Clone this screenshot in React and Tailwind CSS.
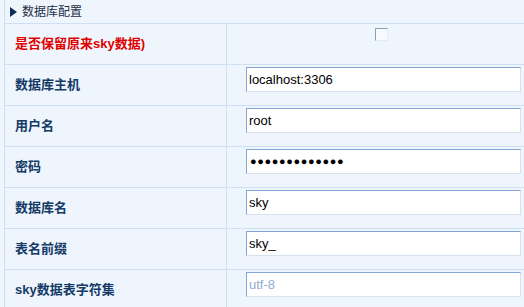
import React from "react";

const font = { fontFamily: '"Liberation Sans", "Noto Sans CJK SC", sans-serif' };

function Field({ children, muted }) {
  return (
    <div
      className={`mt-[2px] ml-[19px] h-[25px] w-[275px] bg-white border border-t-[#83a6d6] border-l-[#83a6d6] border-r-[#d7e2ef] border-b-[#d7e2ef] pl-[2px] flex items-center text-[13px] leading-none ${muted ? "text-[#92acd4]" : "text-black"}`}
    >
      {children}
    </div>
  );
}

function Row({ label, red, children, center }) {
  return (
    <div className="flex h-[41px] border-b border-[#d0e0f3]">
      <div className="w-[222px] shrink-0 flex items-center pl-[10px] border-r border-[#d0e0f3]">
        <span
          className={`text-[13px] font-bold tracking-[0px] ${red ? "text-[#e00000]" : "text-[#143a66]"}`}
        >
          {label}
        </span>
      </div>
      <div className={`flex-1 ${center ? "flex justify-center" : ""}`}>{children}</div>
    </div>
  );
}

export default function App() {
  return (
    <div className="w-[524px] h-[307px] overflow-hidden bg-[#eef5fd]" style={font}>
      <div className="pl-[4px]">
        <div className="border-l border-[#d0e0f3]">
          <div className="h-[24px] flex items-center border-b border-[#d0e0f3] pl-[5px] gap-[4px]">
            <svg width="8" height="10" viewBox="0 0 8 10" className="mt-[1px]">
              <path d="M0 0 L7 5 L0 10 Z" fill="#0e2e5a" />
            </svg>
            <span className="text-[12px] text-[#1f2f45]">数据库配置</span>
          </div>
          <Row label="是否保留原来sky数据)" red>
            <div className="pl-[148px] pt-[4px]">
              <div className="w-[13px] h-[13px] bg-[#f7fafd] border border-t-[#8c9fb8] border-l-[#8c9fb8] border-r-[#e3ebf4] border-b-[#e3ebf4]" />
            </div>
          </Row>
          <Row label="数据库主机">
            <Field>localhost:3306</Field>
          </Row>
          <Row label="用户名">
            <Field>root</Field>
          </Row>
          <Row label="密码">
            <Field>
              <span className="text-[11px] tracking-[0.6px] pl-[1px]">●●●●●●●●●●●●●</span>
            </Field>
          </Row>
          <Row label="数据库名">
            <Field>sky</Field>
          </Row>
          <Row label="表名前缀">
            <Field>sky_</Field>
          </Row>
          <Row label="sky数据表字符集">
            <Field muted>utf-8</Field>
          </Row>
        </div>
      </div>
    </div>
  );
}
